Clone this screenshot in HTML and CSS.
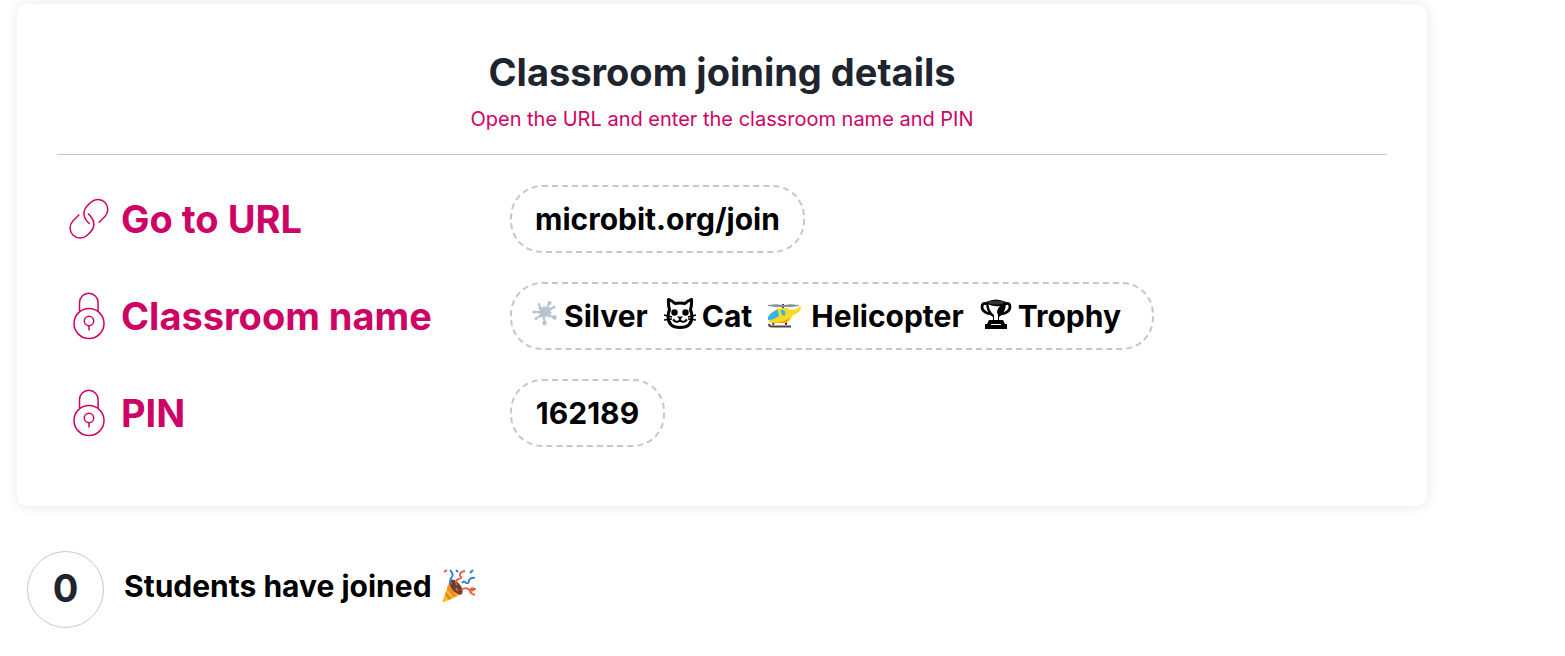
FILE: index.html
```html
<!DOCTYPE html>
<html lang="en">
<head>
<meta charset="utf-8">
<meta name="viewport" content="width=device-width, initial-scale=1">
<title>Classroom joining details</title>
<link rel="stylesheet" href="styles.css">
</head>
<body>
<main class="page">
  <section class="card">
    <header class="card-header">
      <h1 class="title">Classroom joining details</h1>
      <p class="subtitle">Open the URL and enter the classroom name and PIN</p>
    </header>
    <dl class="details">
      <div class="row">
        <dt class="label">
          <svg class="label-icon" viewBox="0 0 40 48" aria-hidden="true"><path d="M10.300 19.500L3.900 25.900A10.300 10.300 0 0 0 3.900 40A10.300 10.300 0 0 0 18.200 40.200L21.800 36.600A10.300 10.300 0 0 0 22.600 22.800A10.300 10.300 0 0 0 18.800 18.600M29.700 27.700L36.100 21.300A10.300 10.300 0 0 0 36.100 7.500A10.300 10.300 0 0 0 21.800 7.300L18.200 10.900A10.300 10.300 0 0 0 16.500 24A10.300 10.300 0 0 0 20.800 28.800"/></svg>
          Go to URL
        </dt>
        <dd class="pill">microbit.org/join</dd>
      </div>
      <div class="row">
        <dt class="label">
          <svg class="label-icon" viewBox="0 0 40 48" aria-hidden="true"><circle cx="20" cy="31.500" r="15"/><path d="M10.500 19V10.500A9.300 9.300 0 0 1 29.100 10.500V19M20 34V38.500"/><circle cx="20" cy="29" r="4.700"/></svg>
          Classroom name
        </dt>
        <dd class="pill pill-names">
          <span class="name"><svg class="splat" viewBox="0 0 26 26" aria-hidden="true"><g fill="none" stroke="#b7c4cf" stroke-linecap="round"><path d="M9 8L7 3.500M15 7L17.500 2M18 9L22 6M17 14L22 16.500M12 16L12.500 22M9 14L4 17.500M9 11L2 11" stroke-width="2"/></g><g fill="#b7c4cf"><path d="M6 6L10 7L12 5L15 7L19 6L18 10L20 12L17 14L18 17L14 15L12 19L10 16L6 17L8 13L4 11L8 10Z"/><circle cx="17.500" cy="2" r="2"/><circle cx="22" cy="6" r="1.500"/><circle cx="22.500" cy="16.500" r="2.300"/><circle cx="12.500" cy="22" r="2.200"/><circle cx="4" cy="17.500" r="1.500"/><circle cx="7" cy="3" r="1"/><circle cx="2" cy="11" r="1.700"/></g></svg>Silver</span>
          <span class="name"><svg class="cat" viewBox="0 0 32 32" aria-hidden="true"><path d="M4 18Q4.500 14 5.500 12Q4 6 4.500 1.500Q8 2.500 11 5.500Q16 4.500 21 5.500Q24 2.500 27.500 1.500Q28 6 26.500 12Q27.500 14 28 18Q28 29.500 16 29.500Q4 29.500 4 18Z" fill="none" stroke="#000" stroke-width="3" stroke-linejoin="round"/><path d="M0 17L8 19M0 22L8 21M32 17L24 19M32 22L24 21" stroke="#000" stroke-width="1.500"/><path d="M9 21.500Q13 26 16 22Q19 26 23 21.500" fill="none" stroke="#000" stroke-width="2"/><ellipse cx="10.500" cy="14.500" rx="3.200" ry="3.200"/><ellipse cx="21.500" cy="14.500" rx="3.200" ry="3.200"/><path d="M13 18.500H19L16 22Z"/></svg>Cat</span>
          <span class="name name-wide"><svg class="heli" viewBox="0 0 34 26" aria-hidden="true"><path d="M6 18L5 22M18 18V22M1 21Q1 23.500 4 23.500H23" fill="none" stroke="#54413f" stroke-width="2"/><path d="M0 14Q5 6 13 5H19L22 7L29 6L32 3L33.500 4L31 9L24 13Q22 20 15 20H5Q0 20 0 14Z" fill="#fdd820"/><path d="M3 19.500Q13 20 22 15Q20 20 15 20H5Z" fill="#f2a600"/><path d="M0 14Q4 8 10 7L11 13Q6 17 0 17ZM12.500 7H16Q18 9 17 13L14 12Z" fill="#35b5e9"/><path d="M15 1V5" stroke="#54413f" stroke-width="2"/><path d="M0 2.500Q8 1 15 2.500Q23 1 31 2.500Q23 4 15 3.500Q7 4 0 2.500Z" fill="#82939c" stroke="#82939c"/></svg>Helicopter</span>
          <span class="name"><svg class="trophy" viewBox="0 0 32 32" aria-hidden="true"><path d="M7 6Q2 4 2 9Q2 14 10 16M25 6Q30 4 30 9Q30 14 22 16" fill="none" stroke="#000" stroke-width="2.800"/><path d="M6 4Q16-1 26 4Q26 15 19 19V22H23L25 26H27V31H5V26H7L9 22H13V19Q6 15 6 4Z"/><path d="M8.500 6.500Q14 9 20 8Q17 11 17 14L18 17V22H14V17Q9 13 8.500 6.500Z" fill="#fff"/><ellipse cx="16" cy="4.500" rx="8" ry="2" fill="#333"/><path d="M11 26.500H21" stroke="#fff"/></svg>Trophy</span>
        </dd>
      </div>
      <div class="row">
        <dt class="label">
          <svg class="label-icon" viewBox="0 0 40 48" aria-hidden="true"><circle cx="20" cy="31.500" r="15"/><path d="M10.500 19V10.500A9.300 9.300 0 0 1 29.100 10.500V19M20 34V38.500"/><circle cx="20" cy="29" r="4.700"/></svg>
          PIN
        </dt>
        <dd class="pill pill-pin">162189</dd>
      </div>
    </dl>
  </section>
  <section class="joined">
    <span class="count">0</span>
    <h2 class="joined-text">Students have joined
      <svg class="party" viewBox="0 0 34 34" aria-hidden="true"><path d="M8 11L20 25L2 33Q0 33 1 31Z" fill="#ffb52e"/><path d="M6 16L15 27L12 28.500L5 20ZM4 23L10 29.500L7 31L3 26Z" fill="#f18b16"/><ellipse cx="14" cy="18" rx="4.500" ry="9" transform="rotate(-40 14 18)" fill="#6b3e32"/><path d="M9.500 15Q7 10 10 8Q12 5 8 1M20 14Q22 11 24 14Q27 15 27 11Q29 8 33 9" fill="none" stroke="#2f7ed0" stroke-width="1.800"/><path d="M15 16Q12 11 17 10Q21 9 18 7Q17 3 23 2M19 21Q23 18 26 20Q30 23 33 20Q30 18 28 21Q27 24 33 26" fill="none" stroke="#f0593b" stroke-width="1.800"/><path d="M28 4L31 1M14 1L16 3" stroke="#2f7ed0" stroke-width="2"/><path d="M2 3L5 1M14 19L16 22" stroke="#f0593b" stroke-width="2"/></svg>
    </h2>
  </section>
</main>
</body>
</html>
```
FILE: styles.css
```css
* { box-sizing: border-box; }
body {
  margin: 0;
  background: #fff;
  color: #000;
  font-family: Inter, "Liberation Sans", sans-serif;
}
.page { padding: 4px 138px 24px 17px; }
.card {
  padding: 44px 40px 59px;
  border-radius: 10px;
  background: #fff;
  box-shadow: 0 0 14px rgba(0, 0, 0, 0.1);
}
.card-header {
  padding-bottom: 21px;
  border-bottom: 1px solid #bdc5d5;
  text-align: center;
}
.title {
  margin: 0;
  color: #20242e;
  font-size: 38px;
  font-weight: 700;
  line-height: 48px;
}
.subtitle {
  margin: 9px 0 0;
  color: #cd0365;
  font-size: 20px;
  line-height: 28px;
}
.details {
  display: grid;
  gap: 29px;
  margin: 30px 0 0;
}
.row {
  display: grid;
  grid-template-columns: 441px 1fr;
  align-items: center;
  padding-left: 12px;
}
.label {
  display: flex;
  align-items: center;
  gap: 12px;
  color: #cd0365;
  font-size: 38px;
  font-weight: 700;
  line-height: 46px;
  white-space: nowrap;
}
.label-icon {
  flex: none;
  width: 40px;
  height: 48px;
  fill: none;
  stroke: #cd0365;
  stroke-width: 1.5;
}
.pill {
  display: flex;
  align-items: center;
  justify-content: center;
  justify-self: start;
  min-height: 68px;
  margin: 0;
  padding: 0 23px;
  border: 2px dashed #c0c7d8;
  border-radius: 32px;
  font-size: 30px;
  font-weight: 700;
  white-space: nowrap;
}
.pill-names { gap: 16px; padding: 0 31px 0 20px; }
.pill-pin { min-width: 155px; }
.name { display: flex; align-items: center; gap: 6px; }
.name-wide { gap: 9px; }
.splat { width: 26px; height: 26px; margin-bottom: 4px; }
.cat, .trophy { width: 32px; height: 32px; margin-bottom: 4px; }
.heli { width: 34px; height: 26px; }
.joined {
  display: flex;
  align-items: center;
  gap: 20px;
  margin-top: 45px;
  padding-left: 10px;
}
.count {
  display: grid;
  place-items: center;
  flex: none;
  width: 77px;
  height: 77px;
  padding-bottom: 3px;
  border: 1px solid #c3c8d8;
  border-radius: 50%;
  color: #20242e;
  font-size: 38px;
  font-weight: 700;
}
.joined-text {
  display: flex;
  align-items: center;
  gap: 10px;
  margin: 0;
  padding-bottom: 8px;
  font-size: 30px;
  font-weight: 700;
}
.party { width: 34px; height: 34px; }
```
